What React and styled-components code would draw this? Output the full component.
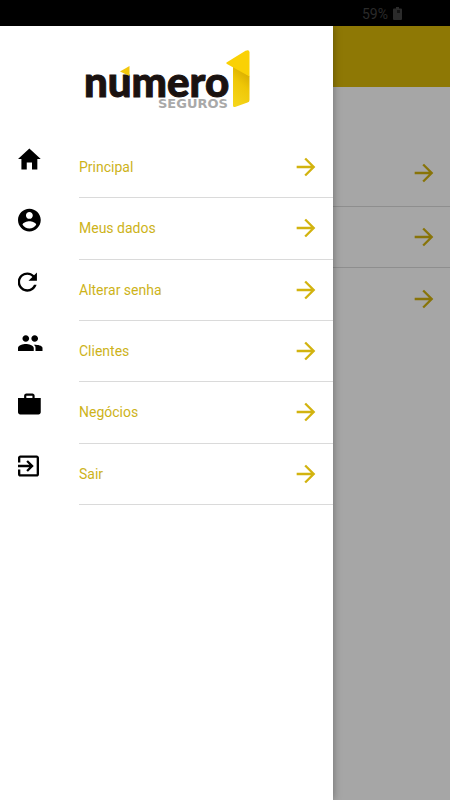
import React from 'react'
import styled, { createGlobalStyle } from 'styled-components'
import { IoMdHome, IoMdContact, IoMdRefresh, IoMdPeople, IoMdBriefcase, IoMdExit } from 'react-icons/io'
import { MdArrowForward } from 'react-icons/md'

const theme = {
  primary: '#d2b30f',
  text: '#cdb31a',
  header: '#dab809',
  line: '#dadada',
}

const GlobalStyle = createGlobalStyle`
  * {
    box-sizing: border-box;
  }
  body {
    margin: 0;
    font-family: Roboto, sans-serif;
    background: #fff;
  }
`

const Page = styled.div`
  display: flex;
  flex-direction: column;
  min-height: 100vh;
`

const StatusBar = styled.header`
  display: flex;
  align-items: center;
  justify-content: flex-end;
  gap: 5px;
  height: 26px;
  padding: 1px 48px 0 0;
  background: #000;
  color: #2b2b2b;
  font-size: 14px;
`

const Stage = styled.div`
  position: relative;
  display: flex;
  flex: 1;
`

const Screen = styled.main`
  flex: 1;
`

const ScreenHeader = styled.div`
  height: 61px;
  margin-bottom: 52px;
  background: ${theme.header};
`

const ScreenRow = styled.a`
  display: flex;
  align-items: center;
  justify-content: flex-end;
  height: ${props => (props.$tall ? '68px' : '61px')};
  padding-right: 12px;
  border-bottom: 1px solid ${theme.line};
  color: ${theme.primary};
  &:last-child {
    border-bottom: 0;
  }
`

const Backdrop = styled.div`
  position: absolute;
  inset: 0;
  background: rgba(0, 0, 0, 0.35);
`

const Drawer = styled.aside`
  position: absolute;
  top: 0;
  bottom: 0;
  left: 0;
  width: 74%;
  background: #fff;
  box-shadow: 0 0 8px rgba(0, 0, 0, 0.35);
`

const LogoArea = styled.div`
  display: flex;
  justify-content: center;
  height: 111px;
  padding-top: 20px;
`

const Menu = styled.nav`
  display: grid;
  grid-auto-rows: 1fr;
  height: 368px;
`

const MenuItem = styled.a`
  display: flex;
  padding-left: 18px;
  color: #000;
  text-decoration: none;
`

const ItemIcon = styled.span`
  width: 61px;
  padding-top: 8px;
`

const ItemBody = styled.span`
  display: flex;
  flex: 1;
  align-items: center;
  justify-content: space-between;
  padding-right: 13px;
  border-bottom: 1px solid ${theme.line};
  color: ${theme.text};
  font-size: 14px;
  > svg {
    color: ${theme.primary};
  }
`

// inset: blank space at the left of the glyph, in icon units
const items = [
  { label: 'Principal', icon: IoMdHome, inset: 48 },
  { label: 'Meus dados', icon: IoMdContact, inset: 48 },
  { label: 'Alterar senha', icon: IoMdRefresh, inset: 86 },
  { label: 'Clientes', icon: IoMdPeople, inset: 32 },
  { label: 'Negócios', icon: IoMdBriefcase, inset: 48 },
  { label: 'Sair', icon: IoMdExit, inset: 64 },
]

const Logo = () => (
  <svg width="170" height="66" viewBox="0 0 170 66" role="img" aria-label="número 1 seguros">
    <defs>
      <linearGradient id="fold" x1="0.6" y1="0.1" x2="0.3" y2="1">
        <stop offset="0" stopColor="#d9ad00" />
        <stop offset="0.4" stopColor="#efc707" />
        <stop offset="1" stopColor="#f5d51a" />
      </linearGradient>
    </defs>
    <text
      x="2"
      y="51"
      fontFamily="Lato, sans-serif"
      fontWeight="900"
      fontSize="42"
      fill="#1a1210"
      stroke="#1a1210"
      strokeWidth="1"
    >
      numero
    </text>
    <path d="M38 25.500 L47.500 20 L47.500 30 Z" fill="#f3c80d" />
    <text x="76" y="62" fontFamily="DejaVu Sans, sans-serif" fontWeight="700" fontSize="13" fill="#a9a9a9">
      SEGUROS
    </text>
    <path d="M151 19 L167.5 30 L167.5 54 Q167.5 56 165.5 56.6 L153 61 Q151 61.5 151 59.5 Z" fill="url(#fold)" />
    <path d="M144.5 16.5 L163.5 4.8 Q167.5 3 167.5 6.5 L167.5 30.5 L145 18 Q143.8 17.3 144.5 16.5 Z" fill="#fad105" />
  </svg>
)

const Battery = () => (
  <svg width="9" height="13" viewBox="0 0 9 13" aria-hidden="true">
    <path d="M3 0h3v1.5h2a1 1 0 0 1 1 1V12a1 1 0 0 1-1 1H1a1 1 0 0 1-1-1V2.5a1 1 0 0 1 1-1h2z" fill="#2b2b2b" />
    <path d="M4 3h3v3H4z" fill="#141414" />
  </svg>
)

export default function App() {
  return (
    <Page>
      <GlobalStyle />
      <StatusBar>
        <span>59%</span>
        <Battery />
      </StatusBar>
      <Stage>
        <Screen>
          <ScreenHeader />
          {[1, 2, 3].map(n => (
            <ScreenRow key={n} href="#" aria-label="Abrir" $tall={n === 1}>
              <MdArrowForward size={28} />
            </ScreenRow>
          ))}
        </Screen>
        <Backdrop />
        <Drawer>
          <LogoArea>
            <Logo />
          </LogoArea>
          <Menu>
            {items.map(({ label, icon: Icon, inset }) => (
              <MenuItem key={label} href="#">
                <ItemIcon>
                  <Icon size={28} viewBox={`${inset} 0 512 512`} />
                </ItemIcon>
                <ItemBody>
                  {label}
                  <MdArrowForward size={28} />
                </ItemBody>
              </MenuItem>
            ))}
          </Menu>
        </Drawer>
      </Stage>
    </Page>
  )
}
